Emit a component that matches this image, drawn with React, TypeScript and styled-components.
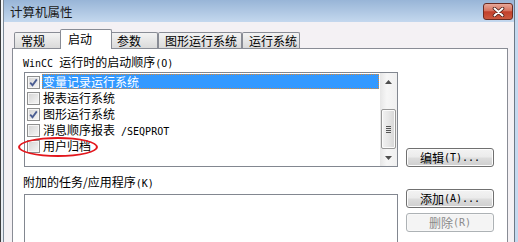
import React from "react";
import styled, { createGlobalStyle } from "styled-components";

const Global = createGlobalStyle`
  * { box-sizing: border-box; }
  html, body { margin: 0; padding: 0; }
  body {
    width: 518px;
    height: 242px;
    overflow: hidden;
    background: #f4f1f4;
    font-family: "Noto Sans CJK SC", sans-serif;
    font-size: 12px;
    color: #000;
  }
`;

const Screen = styled.div`
  display: flex;
  width: 518px;
  height: 242px;
  overflow: hidden;
`;

const Edge = styled.div<{ $side: "left" | "right" }>`
  flex: 0 0 3px;
  background: ${(p) => (p.$side === "left" ? "linear-gradient(#f3f6fa, #e6ebf1)" : "#c4d9ef")};
  border-left: ${(p) => (p.$side === "left" ? "1px solid #3c3c3c" : "none")};
`;

const Window = styled.div`
  flex: 1;
  display: flex;
  flex-direction: column;
  border-left: 1px solid #7d8a98;
  border-right: 1px solid #6c7885;
  background: #f4f1f4;
`;

const TitleBar = styled.div`
  flex: none;
  height: 22px;
  display: flex;
  justify-content: space-between;
  align-items: flex-start;
  padding-left: 6px;
  background: linear-gradient(#98b5d7, #c4d8ee);
`;

const Title = styled.span`
  line-height: 23px;
  font-size: 12.5px;
  color: #1a1a1a;
`;

const CloseBtn = styled.div`
  margin: 3px 1px 0 0;
  width: 30px;
  height: 17px;
  border: 1px solid #6a2b22;
  border-radius: 3px;
  background: linear-gradient(#e8a899 0%, #d6735f 45%, #c2402b 52%, #cc5a40 100%);
  display: flex;
  align-items: center;
  justify-content: center;
`;

const Body = styled.div`
  flex: 1;
  display: flex;
  flex-direction: column;
  padding: 7px 6px 0 8px;
`;

const TabRow = styled.div`
  display: flex;
  align-items: flex-end;
  padding-left: 2px;
`;

const Tab = styled.div<{ $w: number; $active?: boolean }>`
  flex: none;
  width: ${(p) => p.$w}px;
  height: ${(p) => (p.$active ? 20 : 16)}px;
  border: 1px solid #898c95;
  border-bottom: none;
  border-radius: 2px 2px 0 0;
  padding-left: ${(p) => (p.$active ? 7 : 6)}px;
  line-height: ${(p) => (p.$active ? 17 : 15)}px;
  background: ${(p) => (p.$active ? "#fff" : "linear-gradient(#f3f3f3, #dadada)")};
  margin: ${(p) => (p.$active ? "0 -2px -1px -2px" : "0")};
  position: ${(p) => (p.$active ? "relative" : "static")};
  z-index: ${(p) => (p.$active ? 1 : 0)};
  white-space: nowrap;
`;

const Panel = styled.div`
  flex: none;
  height: 210px;
  border: 1px solid #898c95;
  background: #fff;
  padding: 5px 0 0 11px;
  display: grid;
  grid-template-columns: 374px 88px;
  column-gap: 8px;
  align-content: start;
`;

const Label = styled.div<{ $top: number }>`
  grid-column: 1 / 3;
  height: 16px;
  line-height: 16px;
  margin: ${(p) => p.$top}px 0 0 -1px;
  white-space: nowrap;
`;

const Lat = styled.span`
  font-family: "DejaVu Sans Mono", monospace;
  font-size: 10px;
  white-space: pre;
`;

const ListBox = styled.div<{ $h: number; $top: number }>`
  height: ${(p) => p.$h}px;
  margin-top: ${(p) => p.$top}px;
  border: 1px solid #828790;
  background: #fff;
  display: flex;
`;

const Rows = styled.div`
  flex: 1;
  padding: 1px 0 0 2px;
`;

const Row = styled.div`
  height: 16px;
  display: flex;
  align-items: center;
  position: relative;
`;

const Check = styled.span`
  flex: none;
  width: 13px;
  height: 13px;
  margin-right: 2px;
  border: 1px solid #8e8f8f;
  box-shadow: inset 0 0 0 1px #f6f6f6;
  background: linear-gradient(135deg, #d3d3d3, #f7f7f7);
  display: flex;
  align-items: center;
  justify-content: center;
`;

const ItemText = styled.span<{ $sel?: boolean }>`
  align-self: flex-start;
  height: 15px;
  line-height: 15px;
  padding: 0 1px;
  white-space: nowrap;
  flex: ${(p) => (p.$sel ? 1 : "none")};
  margin-right: ${(p) => (p.$sel ? 1 : 0)}px;
  background: ${(p) => (p.$sel ? "#3399ff" : "transparent")};
  color: ${(p) => (p.$sel ? "#fff" : "#000")};
  outline: ${(p) => (p.$sel ? "1px dotted #d9893a" : "none")};
  outline-offset: -1px;
`;

const Ring = styled.span`
  position: absolute;
  left: -9px;
  top: -1px;
  width: 80px;
  height: 20px;
  border: 2px solid #e3161c;
  border-radius: 50%;
  pointer-events: none;
`;

const ScrollBar = styled.div`
  flex: none;
  width: 17px;
  display: flex;
  flex-direction: column;
  align-items: center;
  background: linear-gradient(90deg, #e6e6e6, #f6f6f6 40%, #f0f0f0);
`;

const Arrow = styled.div`
  flex: none;
  height: 17px;
  width: 17px;
  display: flex;
  align-items: center;
  justify-content: center;
`;

const Thumb = styled.div`
  flex: none;
  margin-top: 19px;
  width: 15px;
  height: 40px;
  border: 1px solid #979797;
  border-radius: 2px;
  box-shadow: inset 0 0 0 1px #fbfbfb;
  background: linear-gradient(90deg, #f2f2f2, #e6e6e6 50%, #d6d6d6);
  display: flex;
  flex-direction: column;
  align-items: center;
  justify-content: center;
  gap: 1px;
`;

const Grip = styled.span`
  width: 5px;
  height: 1px;
  background: #555;
`;

const Fill = styled.div`
  flex: 1;
`;

const ButtonCol = styled.div<{ $top: number }>`
  display: flex;
  flex-direction: column;
  gap: 5px;
  align-self: ${(p) => (p.$top < 0 ? "start" : "end")};
  margin-top: ${(p) => p.$top}px;
`;

const Button = styled.div<{ $disabled?: boolean }>`
  width: 88px;
  height: 19px;
  border: 1px solid ${(p) => (p.$disabled ? "#adb2b5" : "#707070")};
  border-radius: 3px;
  box-shadow: inset 0 0 0 1px ${(p) => (p.$disabled ? "#f8f8f8" : "#fcfcfc")};
  background: ${(p) =>
    p.$disabled ? "#f4f4f4" : "linear-gradient(#f3f3f3 0%, #ebebeb 48%, #dddddd 52%, #cfcfcf 100%)"};
  color: ${(p) => (p.$disabled ? "#8a8a8a" : "#000")};
  display: flex;
  align-items: center;
  justify-content: center;
  line-height: 17px;
  white-space: nowrap;
`;

const CheckMark = () => (
  <svg width="9" height="9" viewBox="0 0 9 9">
    <path d="M1.2 4.6 L3.5 7.2 L7.8 1.4" fill="none" stroke="#4a5d92" strokeWidth="1.8" />
  </svg>
);

const ArrowGlyph = ({ up }: { up?: boolean }) => (
  <svg width="7" height="4" viewBox="0 0 7 4">
    <path d={up ? "M0 4 L3.5 0 L7 4 Z" : "M0 0 L3.5 4 L7 0 Z"} fill="#4d4d4d" />
  </svg>
);

type Item = { text: React.ReactNode; checked: boolean; selected?: boolean; marked?: boolean };

const items: Item[] = [
  { text: "变量记录运行系统", checked: true, selected: true },
  { text: "报表运行系统", checked: false },
  { text: "图形运行系统", checked: true },
  { text: <>消息顺序报表<Lat> /SEQPROT</Lat></>, checked: false },
  { text: "用户归档", checked: false, marked: true },
];

const tabs = [
  { label: "常规", w: 48 },
  { label: "启动", w: 52, active: true },
  { label: "参数", w: 48 },
  { label: "图形运行系统", w: 84 },
  { label: "运行系统", w: 58 },
];

export default function App() {
  return (
    <>
      <Global />
      <Screen>
        <Edge $side="left" />
        <Window>
          <TitleBar>
            <Title>计算机属性</Title>
            <CloseBtn>
              <svg width="13" height="10" viewBox="0 0 13 10">
                <path d="M2.5 1.5 L10.5 8.5 M10.5 1.5 L2.5 8.5" stroke="#4a1c14" strokeWidth="3.6" strokeLinecap="round" />
                <path d="M2.5 1.5 L10.5 8.5 M10.5 1.5 L2.5 8.5" stroke="#fff" strokeWidth="2" strokeLinecap="round" />
              </svg>
            </CloseBtn>
          </TitleBar>
          <Body>
            <TabRow>
              {tabs.map((t) => (
                <Tab key={t.label} $w={t.w} $active={t.active}>
                  {t.label}
                </Tab>
              ))}
            </TabRow>
            <Panel>
              <Label $top={0}>
                <Lat>WinCC </Lat>运行时的启动顺序<Lat>(O)</Lat>
              </Label>
              <ListBox $h={95} $top={2}>
                <Rows>
                  {items.map((it, i) => (
                    <Row key={i}>
                      <Check>{it.checked && <CheckMark />}</Check>
                      <ItemText $sel={it.selected}>{it.text}</ItemText>
                      {it.marked && <Ring />}
                    </Row>
                  ))}
                </Rows>
                <ScrollBar>
                  <Arrow>
                    <ArrowGlyph up />
                  </Arrow>
                  <Thumb>
                    <Grip />
                    <Grip />
                    <Grip />
                    <Grip />
                  </Thumb>
                  <Fill />
                  <Arrow>
                    <ArrowGlyph />
                  </Arrow>
                </ScrollBar>
              </ListBox>
              <ButtonCol $top={0}>
                <Button>
                  编辑<Lat>(T)...</Lat>
                </Button>
              </ButtonCol>
              <Label $top={7}>
                附加的任务/应用程序<Lat>(K)</Lat>
              </Label>
              <ListBox $h={60} $top={4} />
              <ButtonCol $top={-1}>
                <Button>
                  添加<Lat>(A)...</Lat>
                </Button>
                <Button $disabled>
                  删除<Lat>(R)</Lat>
                </Button>
              </ButtonCol>
            </Panel>
          </Body>
        </Window>
        <Edge $side="right" />
      </Screen>
    </>
  );
}
